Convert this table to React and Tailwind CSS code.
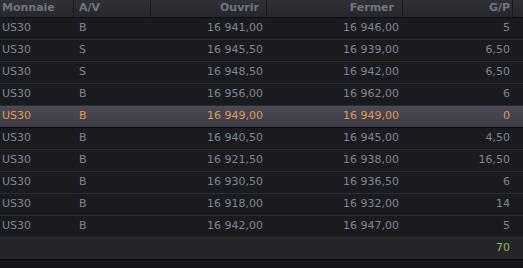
import React from "react";

const rows = [
  ["US30", "B", "16 941,00", "16 946,00", "5"],
  ["US30", "S", "16 945,50", "16 939,00", "6,50"],
  ["US30", "S", "16 948,50", "16 942,00", "6,50"],
  ["US30", "B", "16 956,00", "16 962,00", "6"],
  ["US30", "B", "16 949,00", "16 949,00", "0", true],
  ["US30", "B", "16 940,50", "16 945,00", "4,50"],
  ["US30", "B", "16 921,50", "16 938,00", "16,50"],
  ["US30", "B", "16 930,50", "16 936,50", "6"],
  ["US30", "B", "16 918,00", "16 932,00", "14"],
  ["US30", "B", "16 942,00", "16 947,00", "5"],
];

const cols = "grid grid-cols-[74px_77px_116px_136px_110px_10px]";

export default function App() {
  return (
    <div
      className="w-[523px] h-[268px] bg-[#141518] overflow-hidden text-[11px]"
      style={{ fontFamily: '"DejaVu Sans", Verdana, sans-serif' }}
    >
      <div className={`${cols} h-[18px] items-center bg-gradient-to-b from-[#303136] to-[#26272b] border-b border-[#0e0f11] text-[#6f7682] font-bold`}>
        <div className="pl-[2px] border-r border-[#18191c] h-full flex items-center">Monnaie</div>
        <div className="pl-[5px] border-r border-[#18191c] h-full flex items-center">A/V</div>
        <div className="pr-[7px] text-right border-r border-[#18191c] h-full flex items-center justify-end">Ouvrir</div>
        <div className="pr-[8px] text-right border-r border-[#18191c] h-full flex items-center justify-end">Fermer</div>
        <div className="pr-[2px] text-right border-r border-[#18191c] h-full flex items-center justify-end">G/P</div>
        <div />
      </div>
      {rows.map((r, i) => (
        <div
          key={i}
          className={`${cols} h-[22px] items-center border-b ${
            r[5]
              ? "bg-gradient-to-b from-[#4a4b56] to-[#3a3b44] text-[#e59a4c] border-[#0c0c0e]"
              : "bg-[#1a1b1e] text-[#7f8694] border-[#2b2c30]"
          }`}
        >
          <div className="pl-[2px]">{r[0]}</div>
          <div className="pl-[5px]">{r[1]}</div>
          <div className="text-right pr-[4px]">{r[2]}</div>
          <div className="text-right pr-[4px]">{r[3]}</div>
          <div className="text-right pr-[3px]">{r[4]}</div>
          <div />
        </div>
      ))}
      <div className={`${cols} h-[22px] items-center bg-[#242529] border-b border-[#0c0c0e]`}>
        <div />
        <div />
        <div />
        <div />
        <div className="text-right pr-[3px] text-[#8cbf48]">70</div>
        <div />
      </div>
    </div>
  );
}
